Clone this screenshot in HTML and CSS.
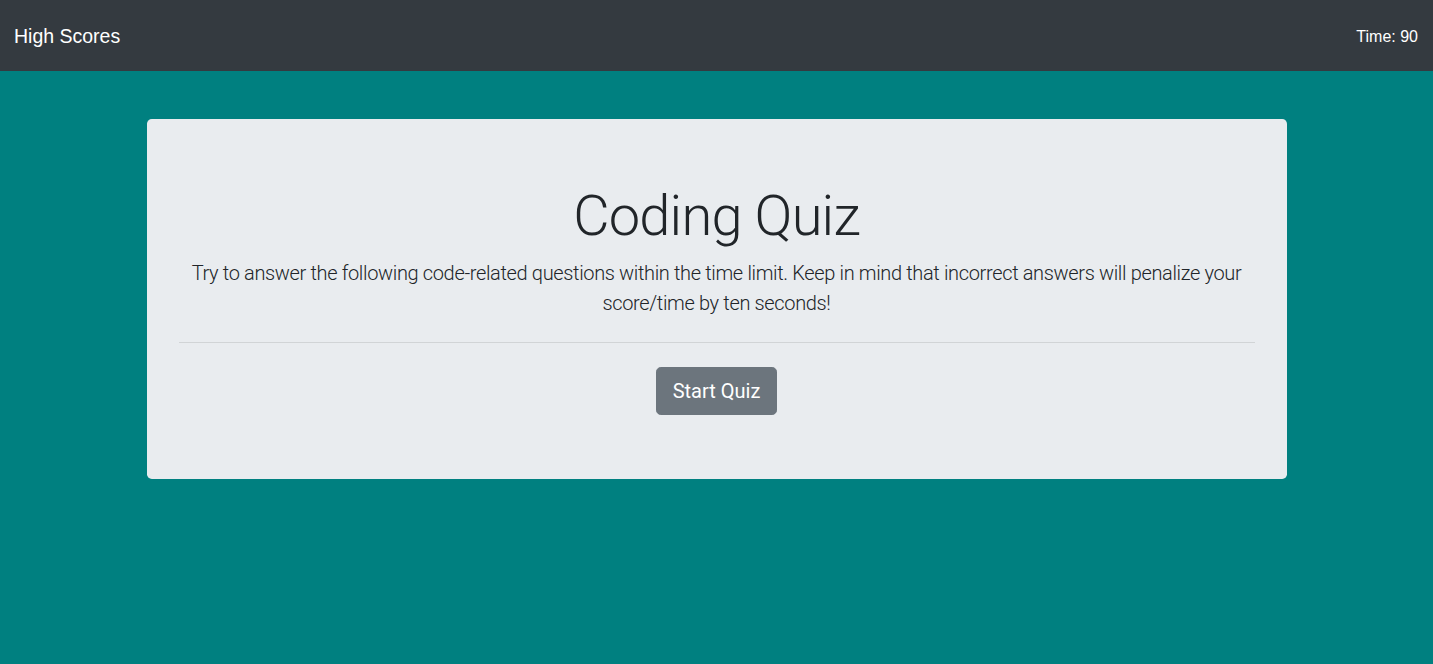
FILE: index.html
```html
<!DOCTYPE html>
<html lang="en">
<head>
<meta charset="utf-8">
<title>Coding Quiz</title>
<link rel="stylesheet" href="styles.css">
</head>
<body>
<nav class="navbar">
  <a class="brand" href="#">High Scores</a>
  <span class="timer">Time: 90</span>
</nav>
<main class="container">
  <section class="jumbotron">
    <h1 class="display">Coding Quiz</h1>
    <p class="lead">Try to answer the following code-related questions within the time limit. Keep in mind that incorrect answers will penalize your score/time by ten seconds!</p>
    <hr class="divider">
    <button class="btn" type="button">Start Quiz</button>
  </section>
</main>
</body>
</html>
```
FILE: styles.css
```css
* { box-sizing: border-box; }
html, body { margin: 0; padding: 0; }
body {
  background: #008080;
  font-family: Roboto, "Liberation Sans", sans-serif;
  color: #212529;
  min-height: 664px;
}
.navbar {
  height: 71px;
  background: #343a40;
  display: flex;
  align-items: center;
  justify-content: space-between;
  padding: 2px 15px 0 14px;
  font-family: "Liberation Sans", Arial, sans-serif;
  color: #fff;
}
.brand {
  color: #fff;
  text-decoration: none;
  font-size: 19.5px;
  line-height: 1.5;
}
.timer {
  font-size: 16px;
  line-height: 1.5;
}
.container {
  width: 1140px;
  margin: 48px auto 0;
}
.jumbotron {
  background: #e9ecef;
  border-radius: 4.8px;
  padding: 64px 32px;
  text-align: center;
}
.display {
  margin: 0 0 8px;
  font-size: 56px;
  font-weight: 300;
  line-height: 1.2;
  letter-spacing: -0.8px;
}
.lead {
  margin: 0 0 16px;
  font-size: 20px;
  font-weight: 300;
  line-height: 1.5;
  letter-spacing: -0.35px;
}
.divider {
  margin: 24px 0;
  border: 0;
  border-top: 1px solid rgba(0,0,0,0.1);
}
.btn {
  display: inline-block;
  background: #6c757d;
  color: #fff;
  border: 1px solid #6c757d;
  border-radius: 4.8px;
  padding: 8px 16px;
  font-family: Roboto, "Liberation Sans", sans-serif;
  font-size: 20px;
  line-height: 1.5;
  font-weight: 400;
  cursor: pointer;
}
```
